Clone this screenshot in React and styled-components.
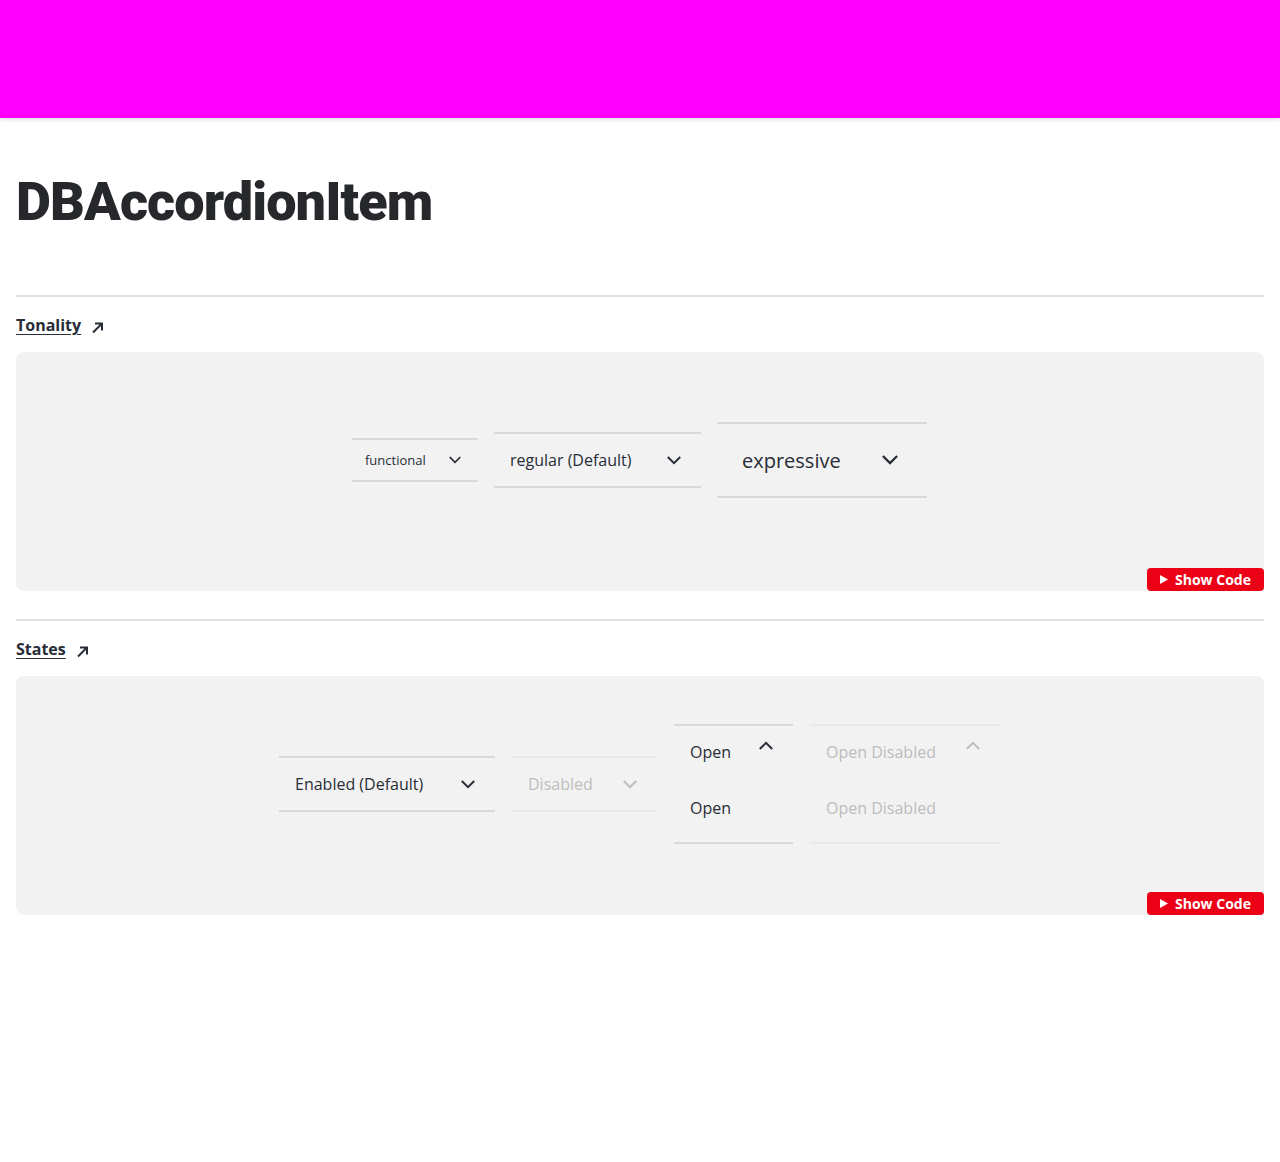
import React from "react";
import styled, { createGlobalStyle, css } from "styled-components";

const GlobalStyle = createGlobalStyle`
  html, body { margin: 0; padding: 0; background: #ffffff; }
  body {
    font-family: "Open Sans", "Noto Sans", sans-serif;
    color: #282d37;
  }
  * { box-sizing: border-box; }
`;

const Header = styled.header`
  height: 118px;
  background: #ff00ff;
  box-shadow: 0 2px 4px rgba(0, 0, 0, 0.12);
`;

const Main = styled.main`
  padding: 0 16px 64px;
`;

const Title = styled.h1`
  margin: 52px 0 61px;
  font-family: "Roboto", "Open Sans", sans-serif;
  font-weight: 900;
  font-size: 54px;
  line-height: 64px;
  letter-spacing: -0.9px;
  color: #26282c;
`;

const Section = styled.section`
  border-top: 2px solid #e3e3e3;
  padding-top: 17px;
  margin-bottom: 28px;
`;

const SectionLink = styled.a`
  display: inline-flex;
  align-items: center;
  gap: 10px;
  font-size: 16px;
  font-weight: 700;
  line-height: 20px;
  color: #282d37;
  text-decoration: none;
  margin-bottom: 17px;
  span {
    text-decoration: underline;
    text-underline-offset: 3px;
  }
  svg { margin-top: 4px; }
`;

const Example = styled.div`
  background: #f2f2f2;
  border-radius: 8px;
  display: flex;
  flex-direction: column;
`;

const Stage = styled.div`
  min-height: 216px;
  display: flex;
  align-items: center;
  justify-content: center;
  gap: ${(p) => p.$gap}px;
  padding-right: 1px;
`;

const ShowCode = styled.button`
  align-self: flex-end;
  height: 23px;
  width: 117px;
  border: 0;
  border-radius: 4px;
  background: #ec0016;
  color: #ffffff;
  font-family: "Open Sans", sans-serif;
  font-weight: 700;
  font-size: 14px;
  display: flex;
  align-items: center;
  justify-content: center;
  gap: 7px;
  padding: 0 0 1px;
  cursor: pointer;
`;

const sizes = {
  sm: { font: 13, pad: 13, height: 40, chevron: 12 },
  md: { font: 16, pad: 16, height: 52, chevron: 14 },
  lg: { font: 20, pad: 25, height: 72, chevron: 16 },
};

const Item = styled.div`
  width: ${(p) => p.$width}px;
  border-top: 2px solid ${(p) => (p.$disabled ? "#e9e9e9" : "#d9d9db")};
  border-bottom: 2px solid ${(p) => (p.$disabled ? "#e9e9e9" : "#d9d9db")};
  color: ${(p) => (p.$disabled ? "#bdbdbd" : "#282d37")};
`;

const Summary = styled.div`
  height: ${(p) => sizes[p.$size].height}px;
  display: flex;
  align-items: center;
  justify-content: space-between;
  padding: 0 ${(p) => sizes[p.$size].pad + 4}px 0 ${(p) => sizes[p.$size].pad}px;
  font-size: ${(p) => sizes[p.$size].font}px;
  ${(p) =>
    p.$open &&
    css`
      svg { margin-top: -14px; }
    `}
`;

const Content = styled.div`
  padding: 18px 16px 22px;
  font-size: 16px;
  line-height: 24px;
`;

const Chevron = ({ size = 14, up = false }) => (
  <svg width={size} height={size / 2 + 2} viewBox="0 0 14 8" fill="none">
    <path
      d={up ? "M1.5 6.8 L7 1.3 L12.5 6.8" : "M1.5 1.2 L7 6.7 L12.5 1.2"}
      stroke="currentColor"
      strokeWidth="2"
      strokeLinecap="square"
    />
  </svg>
);

const Arrow = () => (
  <svg width="13" height="13" viewBox="0 0 13 13" fill="none">
    <path d="M2 11.5 L11 2.5 M4 2.5 H11 V9.5" stroke="#282d37" strokeWidth="2" />
  </svg>
);

const Play = () => (
  <svg width="8" height="9" viewBox="0 0 8 9">
    <path d="M0 0 L8 4.5 L0 9 Z" fill="#ffffff" />
  </svg>
);

const Accordion = ({ label, size = "md", width, disabled, open }) => (
  <Item $width={width} $disabled={disabled}>
    <Summary $size={size} $open={open}>
      <span>{label}</span>
      <Chevron size={sizes[size].chevron} up={open} />
    </Summary>
    {open && <Content>{label}</Content>}
  </Item>
);

const Block = ({ title, gap, children }) => (
  <Section>
    <SectionLink href="#">
      <span>{title}</span>
      <Arrow />
    </SectionLink>
    <Example>
      <Stage $gap={gap}>{children}</Stage>
      <ShowCode>
        <Play />
        Show Code
      </ShowCode>
    </Example>
  </Section>
);

export default function App() {
  return (
    <>
      <GlobalStyle />
      <Header />
      <Main>
        <Title>DBAccordionItem</Title>
        <Block title="Tonality" gap={16}>
          <Accordion label="functional" size="sm" width={126} />
          <Accordion label="regular (Default)" size="md" width={207} />
          <Accordion label="expressive" size="lg" width={210} />
        </Block>
        <Block title="States" gap={17}>
          <Accordion label="Enabled (Default)" width={216} />
          <Accordion label="Disabled" width={145} disabled />
          <Accordion label="Open" width={119} open />
          <Accordion label="Open Disabled" width={190} open disabled />
        </Block>
      </Main>
    </>
  );
}
